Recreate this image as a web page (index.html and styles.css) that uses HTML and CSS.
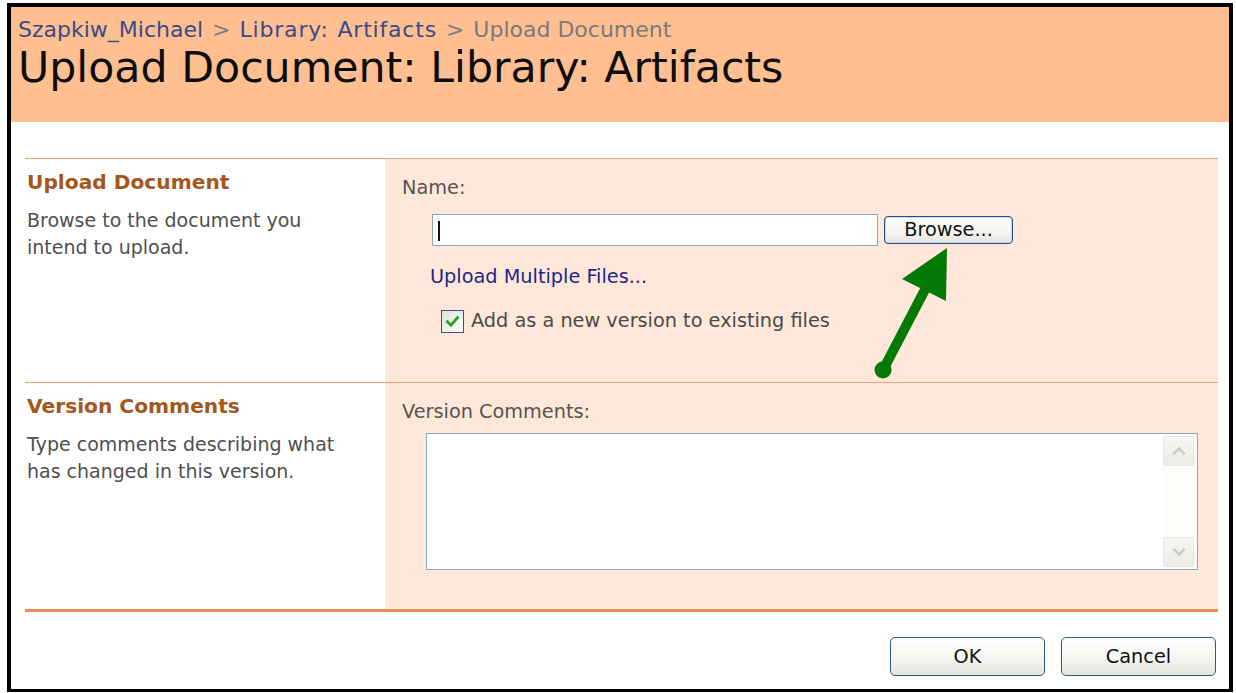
FILE: index.html
```html
<!DOCTYPE html>
<html lang="en">
<head>
<meta charset="utf-8">
<title>Upload Document: Library: Artifacts</title>
<link rel="stylesheet" href="styles.css">
</head>
<body>
<div class="frame">
  <header class="head">
    <nav class="crumbs">
      <a class="crumb">Szapkiw_Michael</a><span class="sep">&gt;</span><a class="crumb crumb-lib">Library: Artifacts</a><span class="sep">&gt;</span><span class="here">Upload Document</span>
    </nav>
    <h1 class="title">Upload Document: Library: Artifacts</h1>
  </header>

  <main class="content">
    <section class="row row-upload">
      <div class="info">
        <h2 class="info-title">Upload Document</h2>
        <p class="info-text">Browse to the document you<br>intend to upload.</p>
      </div>
      <div class="fields">
        <div class="lbl">Name:</div>
        <div class="file-line">
          <div class="name-input"><span class="caret"></span></div>
          <button class="btn btn-browse" type="button">Browse...</button>
        </div>
        <a class="multi">Upload Multiple Files...</a>
        <label class="check">
          <span class="box">
            <svg viewBox="0 0 12 12" width="15" height="15"><path d="M2 6.2 L4.8 9 L10 3" fill="none" stroke="#21a121" stroke-width="2.2" stroke-linecap="square"/></svg>
          </span>
          <span class="check-text">Add as a new version to existing files</span>
        </label>
      </div>
    </section>

    <section class="row row-comments">
      <div class="info">
        <h2 class="info-title">Version Comments</h2>
        <p class="info-text">Type comments describing what<br>has changed in this version.</p>
      </div>
      <div class="fields">
        <div class="lbl lbl-comments">Version Comments:</div>
        <div class="memo">
          <textarea class="memo-text"></textarea>
          <div class="vscroll">
            <span class="vbtn"><svg viewBox="0 0 12 8" width="16" height="10"><path d="M1.5 6.5 L6 2 L10.5 6.5" fill="none" stroke="#c9c8c2" stroke-width="2"/></svg></span>
            <span class="vtrack"></span>
            <span class="vbtn"><svg viewBox="0 0 12 8" width="16" height="10"><path d="M1.5 1.5 L6 6 L10.5 1.5" fill="none" stroke="#c9c8c2" stroke-width="2"/></svg></span>
          </div>
        </div>
      </div>
    </section>

    <div class="actions">
      <button class="btn btn-action" type="button">OK</button>
      <button class="btn btn-action" type="button">Cancel</button>
    </div>
  </main>

  <!-- callout arrow pointing at the Browse button -->
  <svg class="pointer" viewBox="11 7 1218 682" width="1218" height="682">
    <line x1="883" y1="370" x2="930" y2="280" stroke="#047a06" stroke-width="10"/>
    <circle cx="883" cy="370" r="8.5" fill="#047a06"/>
    <polygon points="947,248 902,279 946,301" fill="#047a06"/>
  </svg>
</div>
</body>
</html>
```

FILE: styles.css
```css
* { box-sizing: border-box; }

html, body {
  margin: 0;
  padding: 0;
  background: #ffffff;
}

body {
  font-family: "DejaVu Sans", sans-serif;
  color: #4d4d4d;
}

.frame {
  position: relative;
  margin: 3px 0 0 7px;
  width: 1226px;
  height: 689px;
  border: 4px solid #000;
  border-bottom-width: 3px;
  background: #fff;
  display: flex;
  flex-direction: column;
}

/* title band */
.head {
  height: 115px;
  background: #ffbf91;
  padding: 11px 0 0 7px;
}

.crumbs {
  font-size: 22px;
  line-height: 24px;
  color: #3b4c8c;
  white-space: nowrap;
}

.crumb { color: #3b4a8a; }

.crumb-lib {
  letter-spacing: 0.8px;
  word-spacing: 1px;
}

.sep {
  color: #7d7d8a;
  margin: 0 9px;
}

.here { color: #7a7a7a; }

.title {
  margin: 0;
  font-weight: normal;
  font-size: 42.7px;
  line-height: 50px;
  color: #0d0d0d;
  white-space: nowrap;
}

/* form body */
.content {
  flex: 1;
  padding: 36px 11px 0 14px;
}

.row {
  display: grid;
  grid-template-columns: 360px 1fr;
  border-top: 1px solid #eda578;
}

.row-upload { height: 224px; }

.row-comments {
  height: 230px;
  border-bottom: 3px solid #e68f58;
}

.info {
  padding: 11px 0 0 2px;
}

.info-title {
  margin: 0;
  font-size: 20.2px;
  line-height: 24px;
  font-weight: bold;
  color: #a4561c;
}

.info-text {
  margin: 13px 0 0 0;
  font-size: 19px;
  line-height: 26.5px;
  color: #4f4f4f;
}

.fields {
  background: #ffe8da;
  padding: 17px 0 0 17px;
  display: flex;
  flex-direction: column;
  align-items: flex-start;
  font-size: 19.3px;
  line-height: 24px;
}

.lbl { color: #545454; }

.file-line {
  margin: 14px 0 0 30px;
  display: flex;
  align-items: center;
  gap: 6px;
}

.name-input {
  width: 446px;
  height: 32px;
  background: #fff;
  border: 1px solid #8ba6c4;
  padding: 6px 0 0 5px;
}

.caret {
  display: block;
  width: 2px;
  height: 20px;
  background: #111;
}

.btn {
  font-family: "DejaVu Sans", sans-serif;
  color: #111;
  background: linear-gradient(#ffffff 0%, #f5f4f0 60%, #e4e3dc 100%);
  border: 1px solid #1f4f86;
  border-radius: 4px;
  padding: 0;
  cursor: default;
}

.btn-browse {
  width: 129px;
  height: 28px;
  font-size: 19.3px;
  line-height: 24px;
  box-shadow: inset 0 0 0 1px #c9d8ea;
}

.multi {
  margin: 19px 0 0 28px;
  color: #1c2a85;
}

.check {
  margin: 20px 0 0 39px;
  display: flex;
  align-items: center;
  gap: 7px;
  color: #4a4a4a;
}

.box {
  width: 23px;
  height: 23px;
  border: 1px solid #2a5784;
  background: linear-gradient(135deg, #e2e0d8, #ffffff);
  display: flex;
  align-items: center;
  justify-content: center;
}

.lbl-comments { color: #545454; }

.memo {
  margin: 9px 0 0 24px;
  width: 772px;
  height: 137px;
  border: 1px solid #8ba6c4;
  background: #fff;
  display: flex;
}

.memo-text {
  flex: 1;
  border: 0;
  outline: 0;
  resize: none;
  background: transparent;
}

.vscroll {
  width: 34px;
  padding: 2px 3px 2px 0;
  display: flex;
  flex-direction: column;
  background: #fdfdfa;
}

.vbtn {
  height: 30px;
  border: 1px solid #e8e7e0;
  border-radius: 2px;
  background: linear-gradient(#f7f6f1, #ebeae3);
  display: flex;
  align-items: center;
  justify-content: center;
}

.vtrack { flex: 1; }

/* OK / Cancel */
.actions {
  padding: 25px 2px 0 0;
  display: flex;
  justify-content: flex-end;
  gap: 16px;
}

.btn-action {
  width: 155px;
  height: 39px;
  font-size: 19.3px;
  border: 1.5px solid #2c5a8c;
  border-radius: 5px;
}

.pointer {
  position: absolute;
  left: 0;
  top: 0;
  pointer-events: none;
}
```
